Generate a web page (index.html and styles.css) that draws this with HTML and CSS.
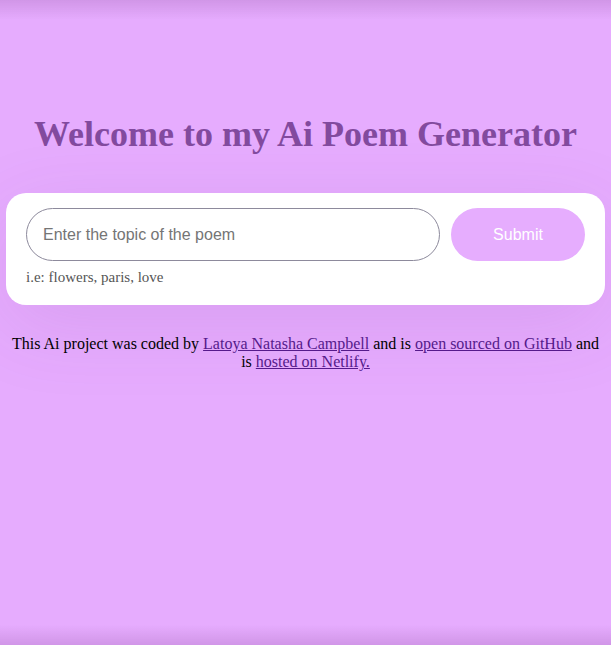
FILE: index.html
```html
<!DOCTYPE html>
<html lang="en">
<head>
<meta charset="utf-8">
<title>Ai Poem Generator</title>
<link rel="stylesheet" href="styles.css">
</head>
<body>
<div class="container">
  <header class="header">
    <h1 class="title">Welcome to my Ai Poem Generator</h1>
  </header>
  <div class="form-wrapper">
    <form class="form">
      <div class="form-row">
        <input class="topic" type="text" placeholder="Enter the topic of the poem">
        <button class="submit" type="button">Submit</button>
      </div>
      <div class="hint">i.e: flowers, paris, love</div>
    </form>
  </div>
  <footer class="footer">
    This Ai project was coded by <a href="#" class="link">Latoya Natasha Campbell</a> and is <a href="#" class="link">open sourced on GitHub</a> and is <a href="#" class="link">hosted on Netlify.</a>
  </footer>
</div>
</body>
</html>
```
FILE: styles.css
```css
html, body {
  height: 100%;
}
body {
  margin: 0;
  background: #e6acfe;
  font-family: "Liberation Serif", "Times New Roman", serif;
  position: relative;
}
body::before, body::after {
  content: "";
  position: fixed;
  left: 0;
  right: 0;
  height: 20px;
  pointer-events: none;
}
body::before {
  top: 0;
  background: linear-gradient(to bottom, rgba(170, 110, 190, 0.35), rgba(170, 110, 190, 0));
}
body::after {
  bottom: 0;
  background: linear-gradient(to top, rgba(170, 110, 190, 0.35), rgba(170, 110, 190, 0));
}
.container {
  padding: 0 6px;
}
.header {
  padding-top: 110px;
  text-align: center;
}
.title {
  margin: 0;
  font-size: 36px;
  font-weight: bold;
  color: #824a9e;
  line-height: 48px;
}
.form-wrapper {
  margin-top: 35px;
}
.form {
  margin: 0;
  background: #fff;
  border-radius: 20px;
  padding: 15px 20px 19px 20px;
  box-shadow: 0 20px 80px rgba(120, 60, 150, 0.12);
}
.form-row {
  display: flex;
  gap: 11px;
}
.topic {
  flex: 1;
  height: 53px;
  box-sizing: border-box;
  border: 1px solid #8d8a9c;
  border-radius: 27px;
  padding: 0 16px;
  font-family: "Liberation Sans", Arial, sans-serif;
  font-size: 16px;
  color: #333;
  outline: none;
}
.topic::placeholder {
  color: #757575;
}
.submit {
  width: 134px;
  height: 53px;
  border: none;
  border-radius: 27px;
  background: #e6adfe;
  color: #fff;
  font-family: "Liberation Sans", Arial, sans-serif;
  font-size: 16px;
}
.hint {
  margin-top: 8px;
  font-size: 15px;
  color: #555;
  line-height: 17px;
}
.footer {
  margin-top: 30px;
  text-align: center;
  font-size: 16px;
  line-height: 18px;
  color: #000;
}
.link {
  color: #551a8b;
}
```
